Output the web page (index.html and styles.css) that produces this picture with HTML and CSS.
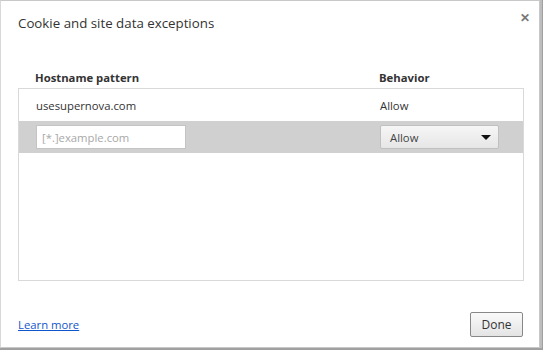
FILE: index.html
```html
<!DOCTYPE html>
<html lang="en">
<head>
    <meta charset="UTF-8">
    <title>Cookie and site data exceptions</title>
    <link rel="stylesheet" href="styles.css">
</head>
<body>
    <div class="dialog">
        <span class="close">&#x2715;</span>
        <h1>Cookie and site data exceptions</h1>

        <div class="list-head">
            <span class="col-host">Hostname pattern</span>
            <span class="col-behavior">Behavior</span>
        </div>

        <div class="list">
            <div class="row">
                <span class="col-host">usesupernova.com</span>
                <span class="col-behavior">Allow</span>
            </div>
            <div class="row selected">
                <span class="col-host"><input type="text" placeholder="[*.]example.com"></span>
                <span class="col-behavior">
                    <span class="select">Allow<span class="arrow"></span></span>
                </span>
            </div>
        </div>

        <div class="footer">
            <a href="#">Learn more</a>
            <button>Done</button>
        </div>
    </div>
</body>
</html>
```

FILE: styles.css
```css
body { margin: 0; background: #a0a0a0; font-family: "Open Sans", "Noto Sans", sans-serif; font-size: 11.3px; color: #333; }
.dialog { position: relative; width: 540px; height: 348px; background: #fff; border: 1px solid #c8c8c8; border-left-color: #d8d8d8; box-sizing: border-box; box-shadow: 2px 0 0 #bdbdbd; }
.close { position: absolute; right: 9px; top: 8px; font-size: 12px; font-weight: bold; color: #777; }
h1 { margin: 0; padding: 13px 0 0 17px; font-size: 13.3px; font-weight: normal; color: #333; height: 48px; box-sizing: border-box; }
.list-head { display: flex; padding: 18px 0 0 34px; height: 39px; box-sizing: border-box; font-weight: bold; }
.col-host { width: 344px; display: flex; align-items: center; }
.col-behavior { flex: 1; display: flex; align-items: center; }
.list { margin-left: 17px; width: 506px; height: 193px; border: 1px solid #d9d9d9; box-sizing: border-box; }
.row { display: flex; height: 32px; padding-left: 17px; }
.row.selected { background: #d0d0d0; }
input { width: 150px; height: 24px; box-sizing: border-box; border: 1px solid #c4c4c4; padding: 0 5px; font: inherit; margin: 0; }
input::placeholder { color: #a8a8a8; }
.select { display: flex; align-items: center; justify-content: space-between; width: 119px; height: 24px; box-sizing: border-box; padding: 0 7px 0 9px; border: 1px solid #c0c0c0; border-radius: 2px; background: linear-gradient(#f6f6f6, #e6e6e6); color: #444; }
.arrow { width: 0; height: 0; border-left: 5px solid transparent; border-right: 5px solid transparent; border-top: 5px solid #111; }
.footer { display: flex; justify-content: space-between; align-items: center; padding: 31px 16px 0 17px; }
a { color: #1155cc; }
button { width: 53px; height: 25px; border: 1px solid #888; border-radius: 2px; background: linear-gradient(#fafafa, #e4e4e4); font: inherit; font-size: 12px; color: #333; padding: 0; }
```
